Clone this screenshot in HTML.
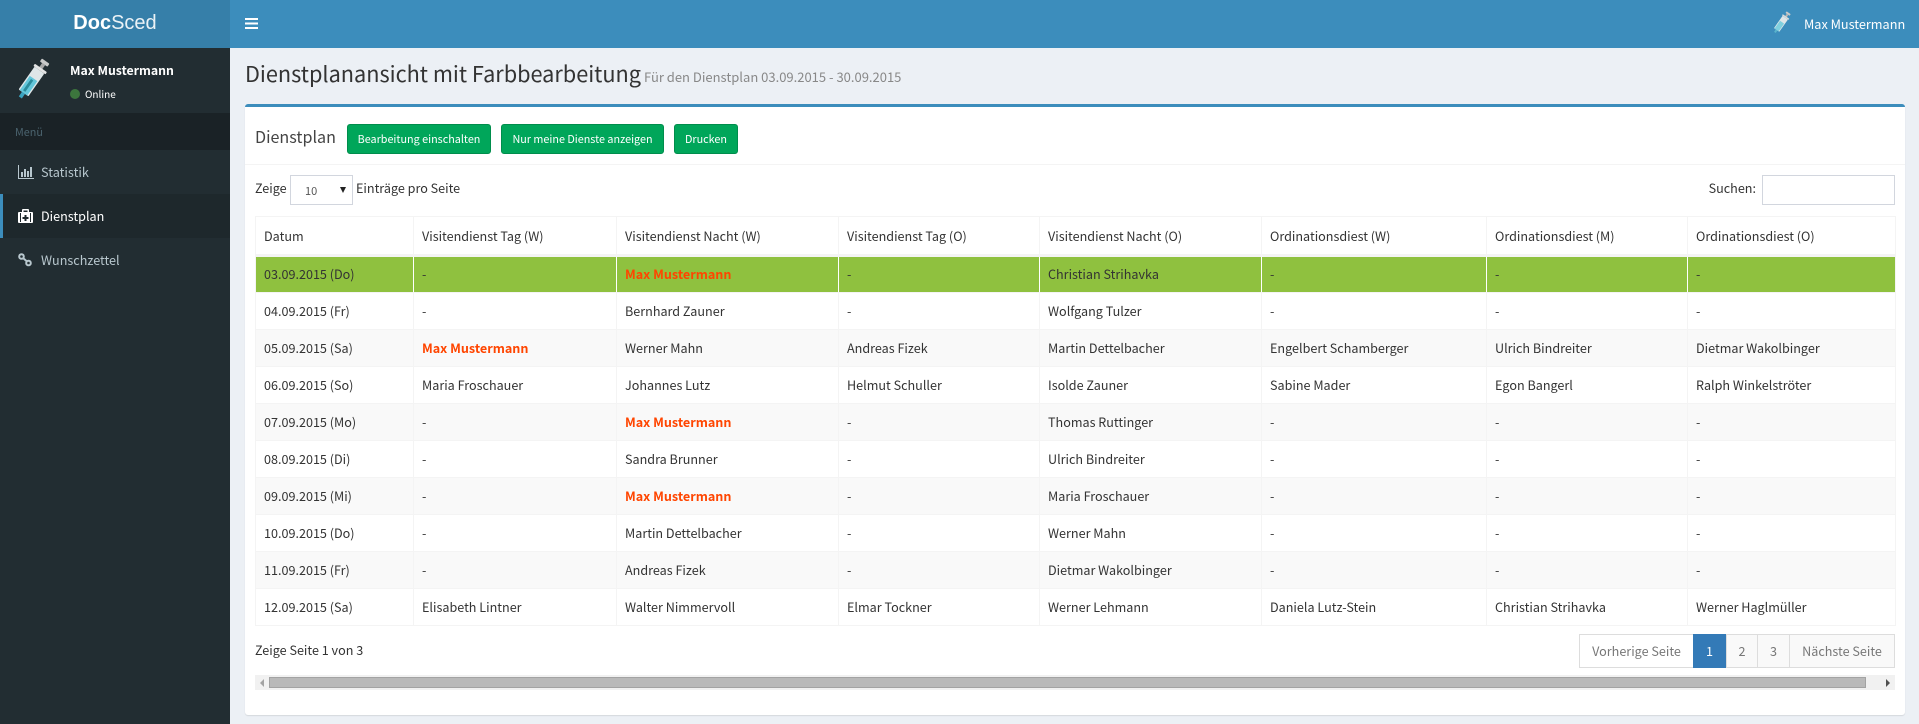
<!DOCTYPE html>
<html lang="de"><head><meta charset="utf-8"><title>Dienstplan</title>
<style>
*{box-sizing:border-box}
html,body{margin:0;padding:0;width:1919px;height:724px;overflow:hidden;background:#ecf0f5}
body{font-family:"Noto Sans CJK JP","Liberation Sans",sans-serif;font-size:12.6px;color:#333;position:relative}
.a{position:absolute;white-space:nowrap}
.btn{position:absolute;top:124px;height:30px;background:#00a65a;border:1px solid #008d4c;border-radius:3px;color:#fff;font-size:10.8px;line-height:28px;text-align:center}
table{position:absolute;left:255px;top:216px;width:1640px;border-collapse:collapse;table-layout:fixed}
th,td{border:1px solid #f4f4f4;padding:0 8px;height:37px;font-size:12.6px;line-height:20px;font-weight:normal;text-align:left;white-space:nowrap;color:#333}
th{height:39px;border-bottom:3px solid #f4f4f4}
tbody tr:nth-child(odd) td{background:#f9f9f9}
tbody tr.g td{background:#8fc13f;border-color:#fff;border-top-color:#f4f4f4;border-bottom-color:#f4f4f4;padding-bottom:2px}
tbody tr.g td:first-child{border-left-color:#f4f4f4}
tbody tr.g td:last-child{border-right-color:#f4f4f4}
b.m{color:#ff4500;font-weight:bold}
.pg{position:absolute;top:634px;height:34px;border:1px solid #ddd;background:#f9f9f9;color:#777;line-height:32px;text-align:center;font-size:12.6px}
</style></head><body>
<div class="a" style="left:0;top:0;width:230px;height:48px;background:#367fa9"></div>
<div class="a" style="left:230px;top:0;width:1689px;height:48px;background:#3c8dbc"></div>
<div class="a" style="left:0;top:48px;width:230px;height:676px;background:#222d32"></div>
<div class="a" style="left:0;top:0;width:230px;height:48px;line-height:47px;text-align:center;color:#fff;font-family:'Liberation Sans',sans-serif;font-size:20px"><b>Doc</b><span style="opacity:.9">Sced</span></div>
<svg class="a" style="left:245px;top:18px" width="13" height="11"><path d="M0 0h13v2H0zM0 4.500h13v2H0zM0 9h13v2H0z" fill="#fff"/></svg>
<svg class="a" style="left:1769px;top:10px" width="25" height="26" viewBox="0 0 50 52"><g transform="rotate(35 25 26)"><rect x="20" y="1" width="10" height="4" rx="1" fill="#c9c9c9"/><rect x="23" y="5" width="4" height="6" fill="#b5b5b5"/><rect x="17" y="10" width="16" height="3" rx="1" fill="#ddd"/><rect x="18.500" y="13" width="13" height="30" rx="1" fill="#dfe6e8"/><rect x="20" y="24" width="10" height="19" fill="#7fd0df"/><rect x="23" y="43" width="4" height="6" fill="#5ab4cc"/></g></svg>
<div class="a" style="left:1804px;top:14px;line-height:20px;color:#fff;font-size:12.7px">Max Mustermann</div>
<svg class="a" style="left:9px;top:56px" width="47" height="48" viewBox="0 0 50 52"><g transform="rotate(35 25 26)"><rect x="20" y="1" width="10" height="4" rx="1" fill="#c9c9c9"/><rect x="23" y="5" width="4" height="6" fill="#a8a8a8"/><rect x="17" y="10" width="16" height="3" rx="1" fill="#e4e4e4"/><rect x="18.500" y="13" width="13" height="30" rx="1" fill="#dfe6e8"/><rect x="20" y="24" width="10" height="19" fill="#63c6da"/><rect x="23" y="26" width="3" height="15" fill="#2a8c9c"/><rect x="23" y="43" width="4" height="6" fill="#3aa3c0"/></g></svg>
<div class="a" style="left:70px;top:60px;line-height:20px;color:#fff;font-weight:bold;font-size:12.3px">Max Mustermann</div>
<div class="a" style="left:70px;top:89px;width:10px;height:10px;border-radius:50%;background:#3c763d"></div>
<div class="a" style="left:85px;top:85px;line-height:18px;color:#fff;font-size:10px">Online</div>
<div class="a" style="left:0;top:113px;width:230px;height:37px;background:#1a2226"></div>
<div class="a" style="left:15px;top:122px;line-height:20px;color:#4b646f;font-size:10.8px">Menü</div>
<div class="a" style="left:0;top:194px;width:230px;height:44px;background:#1e282c;border-left:3px solid #3c8dbc"></div>
<svg class="a" style="left:18px;top:165px" width="16" height="14" fill="#b8c7ce"><path d="M0 0h1v13h15v1H0z"/><path d="M3 7h2v5H3zM6 4h2v8H6zM9 6h2v6H9zM12 2h2v10h-2z"/></svg>
<div class="a" style="left:41px;top:162px;line-height:20px;color:#b8c7ce;font-size:12.7px">Statistik</div>
<svg class="a" style="left:18px;top:209px" width="15" height="14"><path fill="#fff" fill-rule="evenodd" d="M5 0h5a1 1 0 0 1 1 1v2h3a1 1 0 0 1 1 1v9a1 1 0 0 1-1 1H1a1 1 0 0 1-1-1V4a1 1 0 0 1 1-1h3V1a1 1 0 0 1 1-1zm.5 1.500V3h4V1.500zM2 4v9h1V4zm10 0v9h1V4zM6.500 6v2H4.500v2h2v2h2v-2h2V8h-2V6z"/></svg>
<div class="a" style="left:41px;top:206px;line-height:20px;color:#fff;font-size:12.6px">Dienstplan</div>
<svg class="a" style="left:18px;top:253px" width="14" height="14" fill="none" stroke="#b8c7ce" stroke-width="2"><circle cx="3.500" cy="3.500" r="2.300"/><circle cx="10.500" cy="10" r="2.300"/><path d="M5 5l4 3.500"/></svg>
<div class="a" style="left:41px;top:250px;line-height:20px;color:#b8c7ce;font-size:12.6px">Wunschzettel</div>

<div class="a" style="left:245px;top:57px;line-height:34px;font-size:21.7px;color:#333">Dienstplanansicht mit Farbbearbeitung</div>
<div class="a" style="left:644px;top:60px;line-height:34px;font-size:13px;color:#888">Für den Dienstplan 03.09.2015 - 30.09.2015</div>
<div class="a" style="left:245px;top:104px;width:1660px;height:611px;background:#fff;border-top:3px solid #3c8dbc;border-radius:3px;box-shadow:0 1px 1px rgba(0,0,0,.1)"></div>
<div class="a" style="left:245px;top:164px;width:1660px;height:1px;background:#f4f4f4"></div>
<div class="a" style="left:255px;top:126px;line-height:20px;font-size:16.1px;color:#444">Dienstplan</div>
<div class="btn" style="left:347px;width:144px">Bearbeitung einschalten</div>
<div class="btn" style="left:501px;width:163px">Nur meine Dienste anzeigen</div>
<div class="btn" style="left:674px;width:64px">Drucken</div>
<div class="a" style="left:255px;top:178px;line-height:20px">Zeige</div>
<div class="a" style="left:290px;top:175px;width:63px;height:30px;border:1px solid #d2d6de;background:#fff"></div>
<div class="a" style="left:305px;top:181px;line-height:20px;font-size:11px;color:#555">10</div>
<svg class="a" style="left:340px;top:187px" width="6" height="7"><path d="M0 0h6L3 6z" fill="#222"/></svg>
<div class="a" style="left:356px;top:178px;line-height:20px">Einträge pro Seite</div>
<div class="a" style="right:163px;top:178px;line-height:20px">Suchen:</div>
<div class="a" style="left:1762px;top:175px;width:133px;height:30px;border:1px solid #d2d6de;background:#fff"></div>

<table><colgroup><col style="width:158px"><col style="width:203px"><col style="width:222px"><col style="width:201px"><col style="width:222px"><col style="width:225px"><col style="width:201px"><col style="width:208px"></colgroup>
<thead><tr><th>Datum</th><th>Visitendienst Tag (W)</th><th>Visitendienst Nacht (W)</th><th>Visitendienst Tag (O)</th><th>Visitendienst Nacht (O)</th><th>Ordinationsdiest (W)</th><th>Ordinationsdiest (M)</th><th>Ordinationsdiest (O)</th></tr></thead>
<tbody>
<tr class="g"><td>03.09.2015 (Do)</td><td>-</td><td><b class="m">Max Mustermann</b></td><td>-</td><td>Christian Strihavka</td><td>-</td><td>-</td><td>-</td></tr>
<tr><td>04.09.2015 (Fr)</td><td>-</td><td>Bernhard Zauner</td><td>-</td><td>Wolfgang Tulzer</td><td>-</td><td>-</td><td>-</td></tr>
<tr><td>05.09.2015 (Sa)</td><td><b class="m">Max Mustermann</b></td><td>Werner Mahn</td><td>Andreas Fizek</td><td>Martin Dettelbacher</td><td>Engelbert Schamberger</td><td>Ulrich Bindreiter</td><td>Dietmar Wakolbinger</td></tr>
<tr><td>06.09.2015 (So)</td><td>Maria Froschauer</td><td>Johannes Lutz</td><td>Helmut Schuller</td><td>Isolde Zauner</td><td>Sabine Mader</td><td>Egon Bangerl</td><td>Ralph Winkelströter</td></tr>
<tr><td>07.09.2015 (Mo)</td><td>-</td><td><b class="m">Max Mustermann</b></td><td>-</td><td>Thomas Ruttinger</td><td>-</td><td>-</td><td>-</td></tr>
<tr><td>08.09.2015 (Di)</td><td>-</td><td>Sandra Brunner</td><td>-</td><td>Ulrich Bindreiter</td><td>-</td><td>-</td><td>-</td></tr>
<tr><td>09.09.2015 (Mi)</td><td>-</td><td><b class="m">Max Mustermann</b></td><td>-</td><td>Maria Froschauer</td><td>-</td><td>-</td><td>-</td></tr>
<tr><td>10.09.2015 (Do)</td><td>-</td><td>Martin Dettelbacher</td><td>-</td><td>Werner Mahn</td><td>-</td><td>-</td><td>-</td></tr>
<tr><td>11.09.2015 (Fr)</td><td>-</td><td>Andreas Fizek</td><td>-</td><td>Dietmar Wakolbinger</td><td>-</td><td>-</td><td>-</td></tr>
<tr><td>12.09.2015 (Sa)</td><td>Elisabeth Lintner</td><td>Walter Nimmervoll</td><td>Elmar Tockner</td><td>Werner Lehmann</td><td>Daniela Lutz-Stein</td><td>Christian Strihavka</td><td>Werner Haglmüller</td></tr>
</tbody></table>

<div class="a" style="left:255px;top:640px;line-height:20px">Zeige Seite 1 von 3</div>
<div class="pg" style="left:1579px;width:115px;background:#fff">Vorherige Seite</div>
<div class="pg" style="left:1693px;width:33px;background:#337ab7;border-color:#337ab7;color:#fff">1</div>
<div class="pg" style="left:1726px;width:32px">2</div>
<div class="pg" style="left:1757px;width:33px">3</div>
<div class="pg" style="left:1789px;width:106px">Nächste Seite</div>
<div class="a" style="left:255px;top:675px;width:1640px;height:15px;background:#f1f1f1"></div>
<div class="a" style="left:269px;top:677px;width:1597px;height:11px;background:#b9b9b9;border:1px solid #a3a3a3"></div>
<svg class="a" style="left:259px;top:679px" width="6" height="8"><path d="M5 0v8L1 4z" fill="#a3a3a3"/></svg>
<svg class="a" style="left:1885px;top:679px" width="6" height="8"><path d="M1 0v8l4-4z" fill="#505050"/></svg>
</body></html>
